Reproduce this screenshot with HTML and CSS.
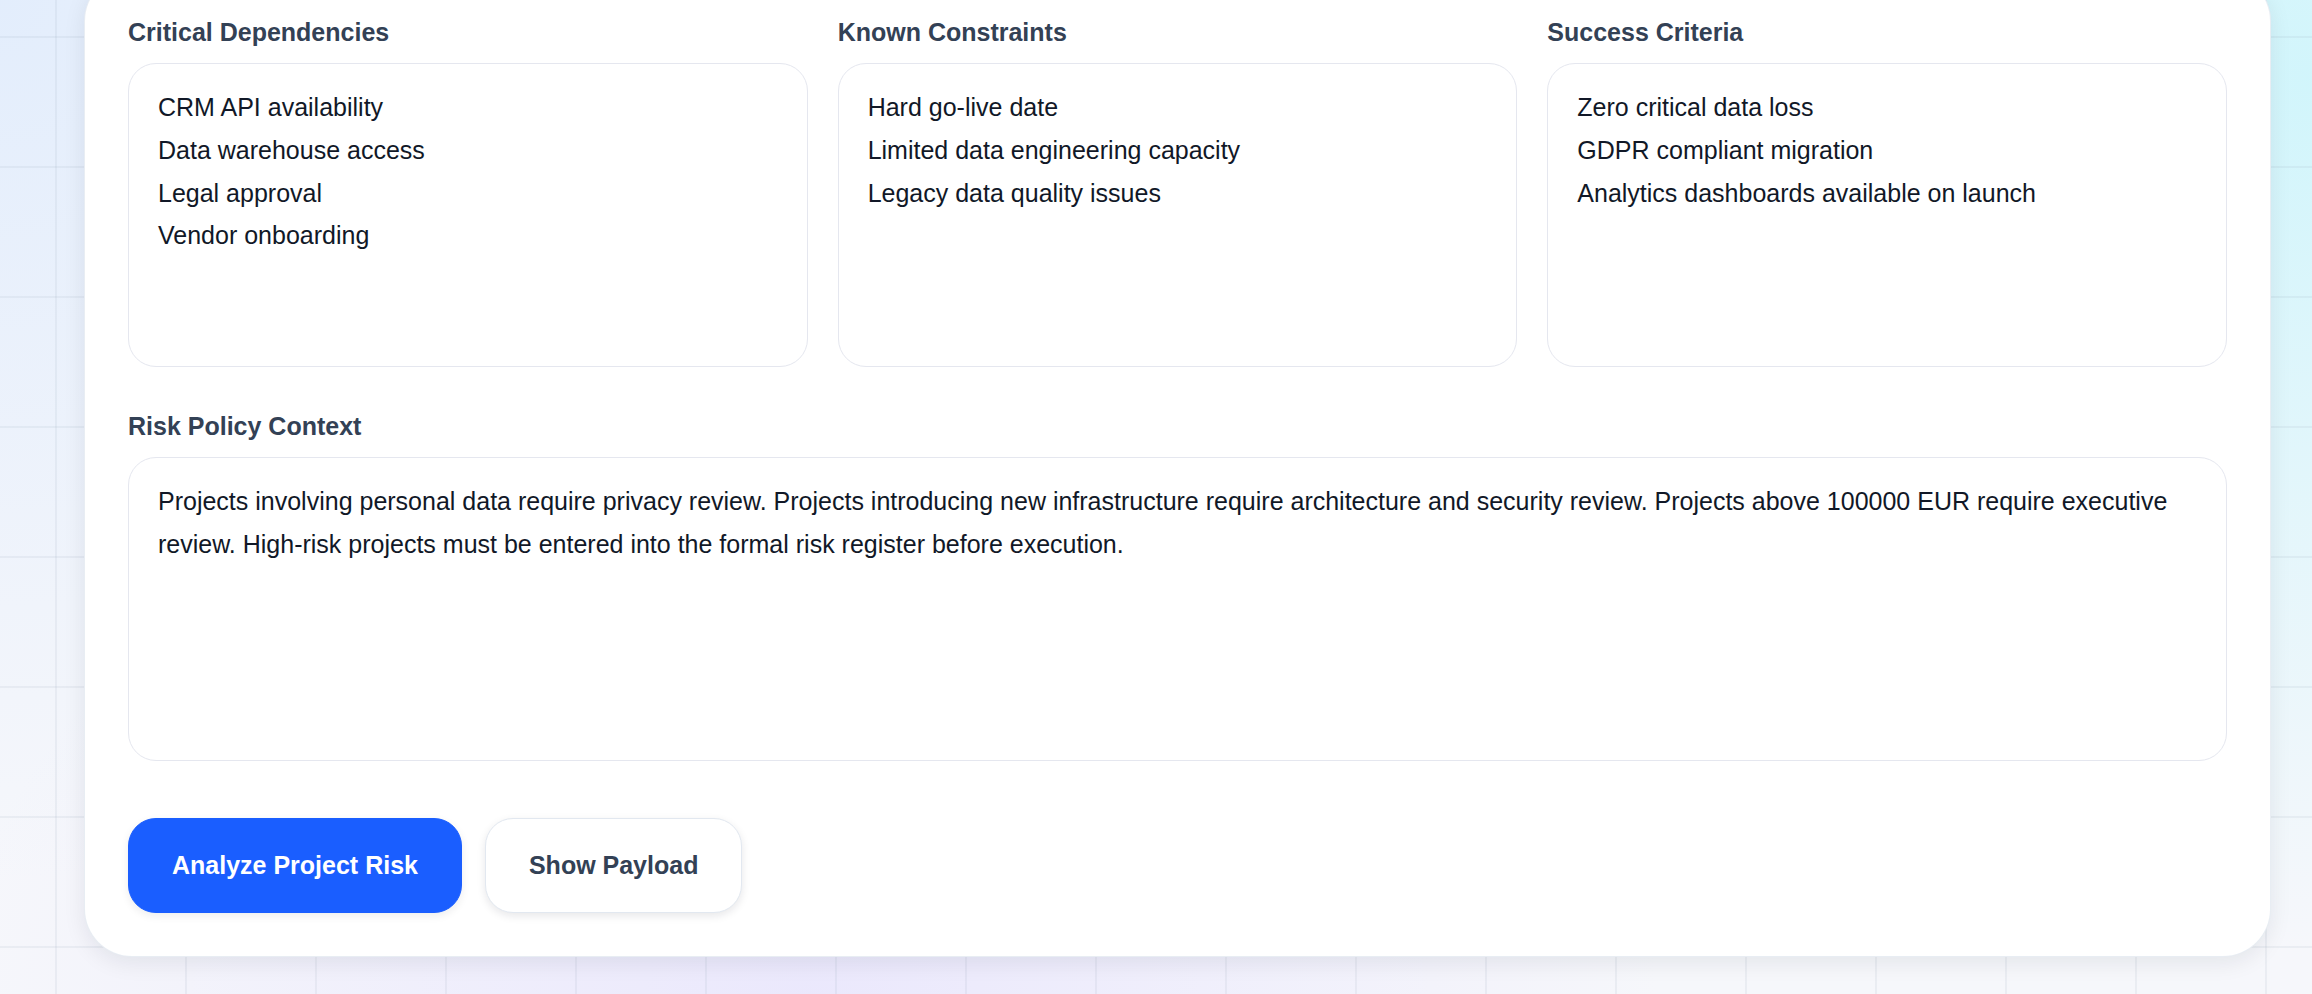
FILE: index.html
```html
<!DOCTYPE html>
<html lang="en">
<head>
  <meta charset="UTF-8" />
  <meta name="viewport" content="width=device-width, initial-scale=1.0"/>
  <title>Project Risk Analyzer</title>
  <link rel="stylesheet" href="styles.css">
</head>
<body>

  <div class="page">
    <form class="card" onsubmit="return false">

      <div class="fields">
        <div class="field">
          <label for="dependencies">Critical Dependencies</label>
          <textarea id="dependencies">CRM API availability
Data warehouse access
Legal approval
Vendor onboarding</textarea>
        </div>

        <div class="field">
          <label for="constraints">Known Constraints</label>
          <textarea id="constraints">Hard go-live date
Limited data engineering capacity
Legacy data quality issues</textarea>
        </div>

        <div class="field">
          <label for="criteria">Success Criteria</label>
          <textarea id="criteria">Zero critical data loss
GDPR compliant migration
Analytics dashboards available on launch</textarea>
        </div>

        <div class="field wide">
          <label for="policy">Risk Policy Context</label>
          <textarea id="policy">Projects involving personal data require privacy review. Projects introducing new infrastructure require architecture and security review. Projects above 100000 EUR require executive review. High-risk projects must be entered into the formal risk register before execution.</textarea>
        </div>
      </div>

      <div class="actions">
        <button type="submit" class="btn primary">Analyze Project Risk</button>
        <button type="button" class="btn secondary">Show Payload</button>
      </div>

    </form>
  </div>

</body>
</html>
```

FILE: styles.css
```css
html, body {
  height: 100%;
}

body {
  margin: 0;
  font-family: 'Liberation Sans', Arial, sans-serif;
  color: #111827;
  overflow: hidden;
  background:
    linear-gradient(to right, rgba(148, 163, 184, 0.12) 2px, transparent 2px),
    linear-gradient(to bottom, rgba(148, 163, 184, 0.12) 2px, transparent 2px),
    radial-gradient(circle at 0% 0%, rgba(191, 219, 254, 0.35), transparent 35%),
    radial-gradient(circle at 100% 8%, rgba(165, 243, 252, 0.45), transparent 35%),
    radial-gradient(ellipse at 35% 100%, rgba(221, 214, 254, 0.45), transparent 40%),
    #f6f7fb;
  background-size: 130px 130px, 130px 130px, auto, auto, auto, auto;
  background-position: 55px 36px, 55px 36px, 0 0, 0 0, 0 0, 0 0;
}

.page {
  padding: 0 41px 0 84px;
}

.card {
  margin-top: -27px;
  background: #ffffff;
  border: 1px solid rgba(226, 232, 240, 0.8);
  border-radius: 48px;
  padding: 43px;
  box-shadow: 0 6px 22px rgba(15, 23, 42, 0.08);
}

.fields {
  display: grid;
  grid-template-columns: repeat(3, 1fr);
  column-gap: 30px;
  row-gap: 44px;
}

.field {
  display: flex;
  flex-direction: column;
}

.field.wide {
  grid-column: 1 / -1;
}

.field label {
  font-size: 25px;
  line-height: 30px;
  font-weight: 700;
  color: #334155;
  margin-bottom: 16px;
}

.field textarea {
  box-sizing: border-box;
  height: 304px;
  padding: 22px 29px;
  border: 1px solid #e5e7ef;
  border-radius: 28px;
  font-family: 'Liberation Sans', Arial, sans-serif;
  font-size: 25px;
  line-height: 1.71;
  color: #111827;
  background: #ffffff;
  resize: none;
  outline: none;
  overflow: hidden;
}

.actions {
  display: flex;
  gap: 23px;
  margin-top: 57px;
}

.btn {
  height: 95px;
  padding: 0 43px;
  border-radius: 28px;
  font-family: 'Liberation Sans', Arial, sans-serif;
  font-size: 25px;
  font-weight: 700;
  cursor: pointer;
}

.btn.primary {
  background: #1a5eff;
  color: #ffffff;
  border: 1px solid #1a5eff;
  box-shadow: 0 3px 8px rgba(15, 23, 42, 0.08);
}

.btn.secondary {
  background: #ffffff;
  color: #334155;
  border: 1px solid #e2e8f0;
  box-shadow: 0 3px 8px rgba(15, 23, 42, 0.1);
}
```
